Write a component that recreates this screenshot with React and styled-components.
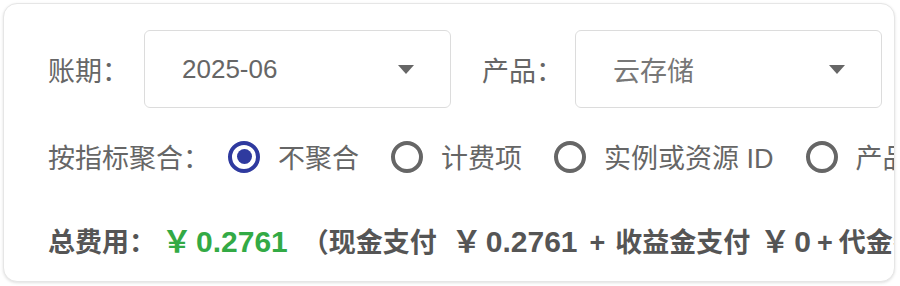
import React from "react";
import styled, { createGlobalStyle } from "styled-components";

const Global = createGlobalStyle`
  html, body { margin: 0; padding: 0; background: #ffffff; }
  body { font-family: "Liberation Sans", "Noto Sans CJK SC", sans-serif; }
`;

const Page = styled.div`
  padding: 3px;
  width: 900px;
  height: 286px;
  box-sizing: border-box;
`;

const Card = styled.div`
  width: 892px;
  height: 279px;
  box-sizing: border-box;
  background: #fff;
  border: 1px solid #e6e6e6;
  border-radius: 14px;
  box-shadow: 0 1px 3px rgba(0, 0, 0, 0.12);
  overflow: hidden;
  padding: 26px 0 0 44px;
  display: flex;
  flex-direction: column;
  white-space: nowrap;
`;

const Row = styled.div`
  display: flex;
  align-items: center;
  margin-top: ${(p) => p.$mt || 0}px;
`;

const Label = styled.span`
  font-size: 27px;
  color: #666;
  margin-right: ${(p) => p.$mr || 0}px;
  flex-shrink: 0;
`;

const Select = styled.div`
  width: 307px;
  height: 78px;
  box-sizing: border-box;
  border: 1px solid #dcdcdc;
  border-radius: 6px;
  padding: 0 36px 0 37px;
  display: flex;
  align-items: center;
  justify-content: space-between;
  font-size: 26px;
  color: #666;
  flex-shrink: 0;
  margin-right: ${(p) => p.$mr || 0}px;
`;

const SelectText = styled.span`
  font-size: ${(p) => (p.$cjk ? 27 : 26)}px;
  color: ${(p) => (p.$cjk ? "#777" : "#666")};
`;

const Arrow = styled.span`
  width: 0;
  height: 0;
  border-left: 8px solid transparent;
  border-right: 8px solid transparent;
  border-top: 9px solid #666;
`;

const Option = styled.label`
  display: flex;
  align-items: center;
  flex-shrink: 0;
  margin-right: 32px;
  font-size: 27px;
  color: #666;
`;

const Radio = styled.span`
  width: 32px;
  height: 32px;
  box-sizing: border-box;
  border-radius: 50%;
  border: 4px solid ${(p) => (p.$checked ? "#2f3a9f" : "#666")};
  display: flex;
  align-items: center;
  justify-content: center;
  margin-right: 18px;
  flex-shrink: 0;
  &::after {
    content: "";
    display: ${(p) => (p.$checked ? "block" : "none")};
    width: 15px;
    height: 15px;
    border-radius: 50%;
    background: #2f3a9f;
  }
`;

const Total = styled.div`
  display: flex;
  align-items: baseline;
  margin-top: 41px;
  font-size: 27px;
  font-weight: bold;
  color: #555;
  flex-shrink: 0;
`;

const Money = styled.span`
  font-size: 30px;
  color: ${(p) => (p.$green ? "#33aa45" : "#555")};
  margin: 0 ${(p) => p.$mr || 0}px 0 ${(p) => p.$ml || 0}px;
`;

const Yen = styled.span`
  margin-right: 4px;
`;

const Plus = styled.span`
  margin: 0 ${(p) => p.$mr}px 0 ${(p) => p.$ml}px;
`;

const options = [
  { label: "不聚合", checked: true },
  { label: "计费项" },
  { label: "实例或资源 ID" },
  { label: "产品" },
  { label: "地域" },
];

export default function App() {
  return (
    <>
      <Global />
      <Page>
        <Card>
          <Row>
            <Label $mr={15}>账期：</Label>
            <Select $mr={31}>
              <SelectText>2025-06</SelectText>
              <Arrow />
            </Select>
            <Label $mr={12}>产品：</Label>
            <Select>
              <SelectText $cjk>云存储</SelectText>
              <Arrow />
            </Select>
          </Row>
          <Row $mt={29}>
            <Label $mr={18}>按指标聚合：</Label>
            {options.map((o) => (
              <Option key={o.label}>
                <Radio $checked={o.checked} />
                {o.label}
              </Option>
            ))}
          </Row>
          <Total>
            <span>总费用：</span>
            <Money $green $ml={6} $mr={14}><Yen>￥</Yen>0.2761</Money>
            <span>（现金支付</span>
            <Money $ml={15}><Yen>￥</Yen>0.2761</Money>
            <Plus $ml={12} $mr={10}>+</Plus>
            <span>收益金支付</span>
            <Money $ml={10}><Yen>￥</Yen>0</Money>
            <Plus $ml={6} $mr={6}>+</Plus>
            <span>代金券支付</span>
            <Money $ml={10}><Yen>￥</Yen>0</Money>
            <span>）</span>
          </Total>
        </Card>
      </Page>
    </>
  );
}
